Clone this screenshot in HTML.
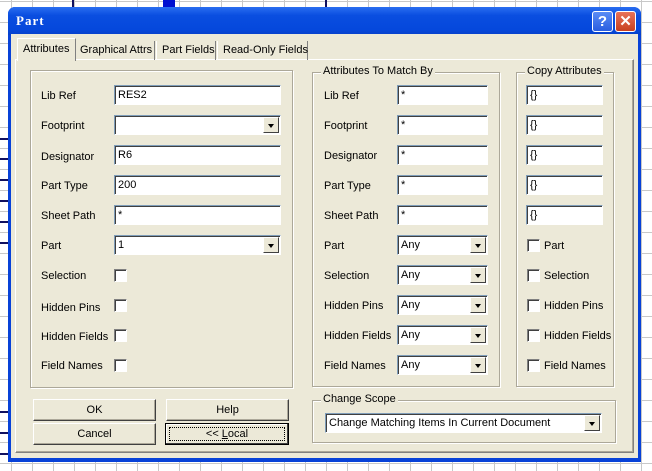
<!DOCTYPE html>
<html><head><style>
*{margin:0;padding:0;box-sizing:border-box}
body{width:652px;height:471px;overflow:hidden;position:relative;font-family:"Liberation Sans",sans-serif;font-size:11px;color:#000;
background:#fff;
background-image:repeating-linear-gradient(90deg,transparent 0 11px,#c8c8c8 11px 12px,transparent 12px 21px),repeating-linear-gradient(0deg,transparent 0 7px,#c8c8c8 7px 8px,transparent 8px 21px);}
div{white-space:nowrap}
.a{position:absolute}
.dl{position:absolute;left:0;width:10px;height:2px;background:#101060}
.dlg{position:absolute;left:8px;top:7px;width:633px;height:455px;background:#0842d8;border-radius:7px 7px 0 0}
.tb{position:absolute;left:8px;top:7px;width:633px;height:28px;border-radius:7px 7px 0 0;background:linear-gradient(#2a6ef0,#0a4ee0 30%,#0548dc 80%,#0640c8)}
.body{position:absolute;left:11px;top:34px;width:627px;height:424px;background:#ece9d8}
.grp{position:absolute;border:1px solid #aca899;box-shadow:inset 1px 1px 0 #fff,1px 1px 0 #fff}
.gt{position:absolute;background:#ece9d8;padding:0 2px;top:-8px}
.in{position:absolute;height:20px;background:#fff;border:1px solid;border-color:#7f9db9 #fff #fff #7f9db9;box-shadow:inset 1px 1px 0 #404040;padding:3px 0 0 3px}
.dd .ar{position:absolute;right:1px;top:1px;width:16px;height:16px;background:#ece9d8;border:1px solid;border-color:#fff #404040 #404040 #fff}
.dd .ar:after{content:"";position:absolute;left:4px;top:6px;border:3.5px solid transparent;border-top:4px solid #000;border-bottom:0}
.cb{position:absolute;width:13px;height:13px;background:#fff;border:1px solid;border-color:#808080 #fff #fff #808080;box-shadow:inset 1px 1px 0 #404040}
.lb{position:absolute;padding-top:1px}
.btn{position:absolute;height:22px;border:1px solid;border-color:#fff #404040 #404040 #fff;box-shadow:inset -1px -1px 0 #aca899;text-align:center;line-height:20px;background:#ece9d8}
</style></head><body>
<div class="dl" style="top:138px"></div><div class="dl" style="top:158px"></div><div class="dl" style="top:179px"></div><div class="dl" style="top:200px"></div><div class="dl" style="top:221px"></div><div class="dl" style="top:242px"></div><div class="dl" style="top:411px"></div><div class="dl" style="top:432px"></div><div class="dl" style="top:453px"></div>
<div class="a" style="left:72px;top:0;width:2px;height:8px;background:#101060"></div>
<div class="a" style="left:163px;top:0;width:12px;height:8px;background:#0010d0"></div>
<div class="a" style="left:325px;top:0;width:2px;height:8px;background:#101060"></div>
<div class="dlg"></div>
<div class="tb"></div>
<div class="a" style="left:16px;top:13px;color:#fff;font-weight:bold;font-size:13px;font-family:'Liberation Serif',serif;letter-spacing:1px">Part</div>
<div class="a" style="left:592px;top:11px;width:21px;height:21px;border:1px solid #fff;border-radius:3px;background:linear-gradient(#5a8cf5,#2a5ee0);color:#fff;font-weight:bold;font-size:15px;text-align:center;line-height:19px">?</div>
<div class="a" style="left:615px;top:11px;width:21px;height:21px;border:1px solid #fff;border-radius:3px;background:linear-gradient(#e8735a,#c8401f);color:#fff;font-weight:bold;font-size:15px;text-align:center;line-height:19px">✕</div>
<div class="body"></div>
<div class="a" style="left:15px;top:59px;width:619px;height:394px;border:1px solid;border-color:#fff #808080 #808080 #fff;box-shadow:inset -1px -1px 0 #aca899"></div>
<div class="a" style="left:17px;top:38px;width:59px;height:23px;background:#ece9d8;border:1px solid;border-color:#fff #808080 transparent #fff;border-bottom:none;padding:4px 0 0 5px">Attributes</div>
<div class="a" style="left:77px;top:41px;width:78px;height:19px;border-right:1px solid #808080;padding:3px 0 0 3px">Graphical Attrs</div>
<div class="a" style="left:156px;top:41px;width:60px;height:19px;border-left:1px solid #fff;border-right:1px solid #808080;padding:3px 0 0 5px">Part Fields</div>
<div class="a" style="left:217px;top:41px;width:91px;height:19px;border-left:1px solid #fff;border-right:1px solid #808080;padding:3px 0 0 5px">Read-Only Fields</div>
<div class="grp" style="left:30px;top:70px;width:263px;height:318px"></div>
<div class="lb" style="left:41px;top:89px">Lib Ref</div><div class="in" style="left:114px;top:85px;width:167px">RES2</div>
<div class="lb" style="left:41px;top:119px">Footprint</div><div class="in dd" style="left:114px;top:115px;width:167px"><div class="ar"></div></div>
<div class="lb" style="left:41px;top:150px">Designator</div><div class="in" style="left:114px;top:145px;width:167px">R6</div>
<div class="lb" style="left:41px;top:179px">Part Type</div><div class="in" style="left:114px;top:175px;width:167px">200</div>
<div class="lb" style="left:41px;top:209px">Sheet Path</div><div class="in" style="left:114px;top:205px;width:167px">*</div>
<div class="lb" style="left:41px;top:239px">Part</div><div class="in dd" style="left:114px;top:235px;width:167px">1<div class="ar"></div></div>
<div class="lb" style="left:41px;top:269px">Selection</div><div class="cb" style="left:114px;top:269px"></div>
<div class="lb" style="left:41px;top:301px">Hidden Pins</div><div class="cb" style="left:114px;top:299px"></div>
<div class="lb" style="left:41px;top:330px">Hidden Fields</div><div class="cb" style="left:114px;top:329px"></div>
<div class="lb" style="left:41px;top:359px">Field Names</div><div class="cb" style="left:114px;top:359px"></div>
<div class="grp" style="left:312px;top:72px;width:188px;height:315px"><div class="gt" style="left:8px">Attributes To Match By</div></div>
<div class="lb" style="left:324px;top:89px">Lib Ref</div><div class="in" style="left:397px;top:85px;width:91px">*</div>
<div class="lb" style="left:324px;top:119px">Footprint</div><div class="in" style="left:397px;top:115px;width:91px">*</div>
<div class="lb" style="left:324px;top:149px">Designator</div><div class="in" style="left:397px;top:145px;width:91px">*</div>
<div class="lb" style="left:324px;top:179px">Part Type</div><div class="in" style="left:397px;top:175px;width:91px">*</div>
<div class="lb" style="left:324px;top:209px">Sheet Path</div><div class="in" style="left:397px;top:205px;width:91px">*</div>
<div class="lb" style="left:324px;top:239px">Part</div><div class="in dd" style="left:397px;top:235px;width:91px">Any<div class="ar"></div></div>
<div class="lb" style="left:324px;top:269px">Selection</div><div class="in dd" style="left:397px;top:265px;width:91px">Any<div class="ar"></div></div>
<div class="lb" style="left:324px;top:299px">Hidden Pins</div><div class="in dd" style="left:397px;top:295px;width:91px">Any<div class="ar"></div></div>
<div class="lb" style="left:324px;top:329px">Hidden Fields</div><div class="in dd" style="left:397px;top:325px;width:91px">Any<div class="ar"></div></div>
<div class="lb" style="left:324px;top:359px">Field Names</div><div class="in dd" style="left:397px;top:355px;width:91px">Any<div class="ar"></div></div>
<div class="grp" style="left:516px;top:72px;width:98px;height:315px"><div class="gt" style="left:8px">Copy Attributes</div></div>
<div class="in" style="left:526px;top:85px;width:77px">{}</div>
<div class="in" style="left:526px;top:115px;width:77px">{}</div>
<div class="in" style="left:526px;top:145px;width:77px">{}</div>
<div class="in" style="left:526px;top:175px;width:77px">{}</div>
<div class="in" style="left:526px;top:205px;width:77px">{}</div>
<div class="cb" style="left:527px;top:239px"></div><div class="lb" style="left:544px;top:239px">Part</div>
<div class="cb" style="left:527px;top:269px"></div><div class="lb" style="left:544px;top:269px">Selection</div>
<div class="cb" style="left:527px;top:299px"></div><div class="lb" style="left:544px;top:299px">Hidden Pins</div>
<div class="cb" style="left:527px;top:329px"></div><div class="lb" style="left:544px;top:329px">Hidden Fields</div>
<div class="cb" style="left:527px;top:359px"></div><div class="lb" style="left:544px;top:359px">Field Names</div>
<div class="grp" style="left:312px;top:400px;width:304px;height:43px"><div class="gt" style="left:8px">Change Scope</div></div>
<div class="in dd" style="left:325px;top:413px;width:277px">Change Matching Items In Current Document<div class="ar"></div></div>
<div class="btn" style="left:33px;top:399px;width:123px">OK</div>
<div class="btn" style="left:166px;top:399px;width:123px">Help</div>
<div class="btn" style="left:33px;top:423px;width:123px">Cancel</div>
<div class="btn" style="left:165px;top:423px;width:124px;border:1px solid #000;box-shadow:inset -1px -1px 0 #404040,inset 1px 1px 0 #fff"><span style="position:absolute;left:3px;top:3px;right:3px;bottom:3px;border:1px dotted #000"></span>&lt;&lt; <u>L</u>ocal</div>
</body></html>
